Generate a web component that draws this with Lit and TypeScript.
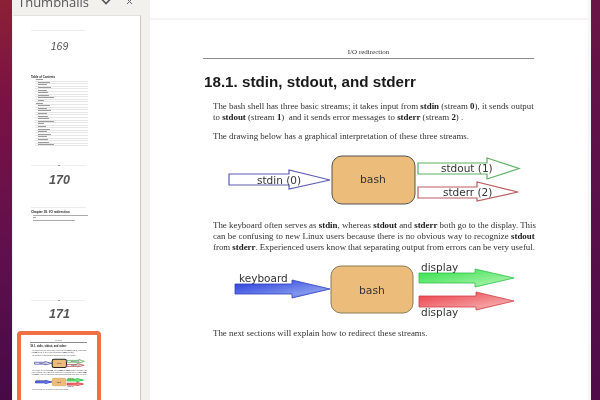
import { LitElement, html, css, svg } from "lit";
import { customElement } from "lit/decorators.js";

const tocRows = Array.from({ length: 26 }, (_, i) => ({
  indent: [0, 9, 28, 9].includes(i) ? 2 : 6,
  width: [40, 65, 50, 70, 45, 55, 60, 85, 30][i % 9],
}));

function arrow(x0: number, x1: number, xh: number, top: number, bot: number, ht: number, hb: number, tip: number, stroke: string, fill: string, sw = 1.2) {
  const d = `M${x0} ${top}H${xh}V${ht}L${x1} ${tip}L${xh} ${hb}V${bot}H${x0}Z`;
  return svg`<path d=${d} fill=${fill} stroke=${stroke} stroke-width=${sw} />`;
}

function box(x: number, y: number, w: number, h: number, t: string, tx: number, ty: number, stroke: string) {
  return svg`<rect x=${x} y=${y} width=${w} height=${h} rx="10" fill="#ecbd7a" stroke=${stroke} stroke-width="1" />
    <text x=${tx} y=${ty} class="lbl" font-size="10.8">${t}</text>`;
}

function diagramOne() {
  return html`<svg class="diagram one" viewBox="0 0 331 50" width="331" height="50">
    ${arrow(26, 127, 86, 19, 30, 15, 34, 25, "#5c5cb4", "#fff")}
    ${box(129, 1, 83, 48, "bash", 157, 28, "#555")}
    ${arrow(215, 316, 284, 8, 19, 3, 24, 13.5, "#5cb060", "#fff")}
    ${arrow(215, 315, 274, 32, 43, 27, 46, 37, "#b85c60", "#fff")}
    <text x="54" y="29" class="lbl" font-size="10.5">stdin (0)</text>
    <text x="238" y="17" class="lbl" font-size="10.5">stdout (1)</text>
    <text x="240" y="41" class="lbl" font-size="10.5">stderr (2)</text>
  </svg>`;
}

function diagramTwo() {
  return html`<svg class="diagram two" viewBox="0 0 331 54" width="331" height="54">
    <defs>
      <linearGradient id="gb" x1="0" x2="1" y1="0" y2="1"><stop offset="0" stop-color="#2438dc" /><stop offset="0.72" stop-color="#8297ec" /><stop offset="1" stop-color="#3044d8" /></linearGradient>
      <linearGradient id="gg" x1="0" x2="1" y1="0" y2="1"><stop offset="0" stop-color="#2ee048" /><stop offset="0.75" stop-color="#98f09c" /><stop offset="1" stop-color="#34d84c" /></linearGradient>
      <linearGradient id="gr" x1="0" x2="1" y1="0" y2="1"><stop offset="0" stop-color="#ea3a42" /><stop offset="0.75" stop-color="#f4a0a2" /><stop offset="1" stop-color="#e24048" /></linearGradient>
    </defs>
    ${arrow(32, 127, 89, 24, 34, 20, 38, 29, "#3040c0", "url(#gb)", 0.8)}
    ${box(128, 6, 82, 47, "bash", 156, 34, "#8a7a5a")}
    ${arrow(216, 311, 272, 13, 23, 9, 27, 18, "#30c048", "url(#gg)", 0.8)}
    ${arrow(216, 311, 273, 36, 47, 32, 50, 41, "#d04048", "url(#gr)", 0.8)}
    <text x="36" y="22" class="lbl" font-size="10.5">keyboard</text>
    <text x="218" y="11" class="lbl" font-size="10.5">display</text>
    <text x="218" y="56" class="lbl" font-size="10.5">display</text>
  </svg>`;
}

function pageBody() {
  return html`
    <div class="running">I/O redirection</div>
    <h2>18.1. stdin, stdout, and stderr</h2>
    <p class="first">The bash shell has three basic streams; it takes input from <b>stdin</b> (stream <b>0</b>), it sends output<br />to <b>stdout</b> (stream <b>1</b>) &nbsp;and it sends error messages to <b>stderr</b> (stream <b>2</b>) .</p>
    <p>The drawing below has a graphical interpretation of these three streams.</p>
    ${diagramOne()}
    <p class="after">The keyboard often serves as <b>stdin</b>, whereas <b>stdout</b> and <b>stderr</b> both go to the display. This<br /><span class="wide">can be confusing to new Linux users because there is no obvious way to recognize <b>stdout</b></span><br /><span class="tight">from <b>stderr</b>. Experienced users know that separating output from errors can be very useful.</span></p>
    ${diagramTwo()}
    <p class="last">The next sections will explain how to redirect these streams.</p>
  `;
}

const pageStyles = css`
  .running { font: 7px/10px "Liberation Serif", serif; color: #333; text-align: center; height: 11px; padding-top: 1px; border-bottom: 1px solid #8c8c8c; }
  h2 { margin: 13px 0 0 1px; font: 700 15.2px/20px "Liberation Sans", sans-serif; color: #1a1a1a; white-space: nowrap; }
  p { margin: 0 0 0 10px; font: 8.9px/11px "Liberation Serif", serif; color: #333; white-space: nowrap; }
  p b { color: #1a1a1a; }
  p.first { margin-top: 9px; margin-bottom: 8px; }
  p.after { margin-top: 15px; }
  p.last { margin-top: 14px; }
  .wide { word-spacing: 0.2px; }
  .tight { word-spacing: -0.2px; }
  .diagram { display: block; margin-top: 13px; overflow: visible; }
  .diagram.two { margin-top: 7px; }
  .lbl { font-family: "DejaVu Sans", sans-serif; fill: #333; }
`;

@customElement("app-root")
export class AppRoot extends LitElement {
  static styles = [
    pageStyles,
    css`
      :host { display: flex; width: 600px; height: 400px; overflow: hidden; filter: blur(0.45px); background: #fff; }
      .wall-left { width: 12px; flex: none; background: linear-gradient(180deg, #8c2036 0%, #7a1244 25%, #62104c 60%, #460a46 100%); }
      .wall-right { width: 9px; flex: none; background: linear-gradient(180deg, #6a1546 0%, #5a104a 50%, #4e0c48 100%); }
      .sidebar { width: 138px; flex: none; background: #f2f1ee; display: flex; flex-direction: column; }
      .side-head { height: 15px; flex: none; display: flex; align-items: flex-end; overflow: hidden; padding-left: 6px; }
      .side-head .title { font: 13px/17px "Open Sans", sans-serif; color: #555; width: 81px; flex: none; margin-bottom: 4px; }
      .side-head svg { flex: none; }
      .chev { margin: 0 14px 10px 1px; }
      .close { margin-bottom: 10px; }
      .panel { margin-left: 1px; width: 128px; flex: 1; min-height: 0; background: #fff; border-right: 1px solid #c6c6c4; border-top: 1px solid #e2e2e0; overflow: hidden; padding-left: 18px; box-sizing: border-box; }
      .rule { width: 55px; height: 1px; background: #ececec; }
      .pg-label { width: 57px; text-align: center; font-family: "Liberation Sans", sans-serif; font-style: italic; color: #555; }
      .l169 { margin-top: 9px; font-size: 10.5px; line-height: 12px; }
      .toc { margin-top: 23px; width: 57px; }
      .toc-title { font: 700 2.9px/4px "Liberation Sans", sans-serif; color: #222; height: 4px; }
      .toc-row { height: 2.6px; margin-left: 4px; display: flex; align-items: center; border-bottom: 0.6px solid #e6e6e6; box-sizing: border-box; }
      .toc-row i { display: block; height: 1px; background: #9a9a9a; }
      .rule-dot { width: 55px; height: 1px; background: #eee; display: flex; justify-content: center; }
      .rule-dot span { width: 2px; height: 1px; background: #999; }
      .l170 { margin-top: 7px; font-size: 12.5px; line-height: 14px; font-weight: 700; }
      .chapter { width: 57px; margin-top: 20px; }
      .chapter .rule { margin-bottom: 2px; }
      .ch-title { font: 700 3.1px/4px "Liberation Sans", sans-serif; color: #222; white-space: nowrap; }
      .ch-line { height: 1px; background: #aaa; margin: 1px 0 0 2px; }
      .l171 { margin-top: 6px; font-size: 12.5px; line-height: 14px; font-weight: 700; }
      .selected { margin: 10px 0 0 -14px; width: 84px; height: 90px; box-sizing: border-box; border: 4px solid #ef7040; border-radius: 4px; background: #fff; padding: 4px 0 0 9px; overflow: hidden; }
      .mini { zoom: 0.172; width: 331px; }
      .mini .diagram.one rect { stroke: #222; stroke-width: 6; }
      .mini .diagram.one path, .mini .diagram.two path { stroke-width: 5; }
      .main { flex: 1; min-width: 0; background: #fff; display: flex; flex-direction: column; }
      .band { height: 18px; flex: none; border-bottom: 2px solid #f5f5f3; }
      .page { margin: 26px 0 0 53px; width: 331px; }
      .edge { width: 3px; flex: none; background: #f6f6f4; }
    `,
  ];

  render() {
    return html`
      <div class="wall-left"></div>
      <aside class="sidebar">
        <div class="side-head">
          <div class="title">Thumbnails</div>
          <svg class="chev" width="12" height="7" viewBox="0 0 12 7"><path d="M2 1.5L6 5.5L10 1.5" fill="none" stroke="#555" stroke-width="1.6" /></svg>
          <svg class="close" width="7" height="7" viewBox="0 0 7 7"><path d="M1 1L6 6M6 1L1 6" fill="none" stroke="#666" stroke-width="1" /></svg>
        </div>
        <div class="panel">
          <div class="rule" style="margin-top:14px"></div>
          <div class="pg-label l169">169</div>
          <div class="toc">
            <div class="toc-title">Table of Contents</div>
            ${tocRows.map((r) => html`<div class="toc-row"><i style="margin-left:${r.indent}%;width:${r.width * 0.35}%"></i></div>`)}
          </div>
          <div class="rule-dot" style="margin-top:19px"><span></span></div>
          <div class="pg-label l170">170</div>
          <div class="chapter">
            <div class="rule"></div>
            <div class="ch-title">Chapter 18. I/O redirection</div>
            <div class="ch-line"></div>
            <div class="ch-line" style="width:3px"></div>
            <div class="ch-line" style="margin-top:2px;width:42px"></div>
          </div>
          <div class="rule-dot" style="margin-top:79px"><span></span></div>
          <div class="pg-label l171">171</div>
          <div class="selected"><div class="mini">${pageBody()}</div></div>
        </div>
      </aside>
      <main class="main">
        <div class="band"></div>
        <div class="page">${pageBody()}</div>
      </main>
      <div class="edge"></div>
      <div class="wall-right"></div>
    `;
  }
}
